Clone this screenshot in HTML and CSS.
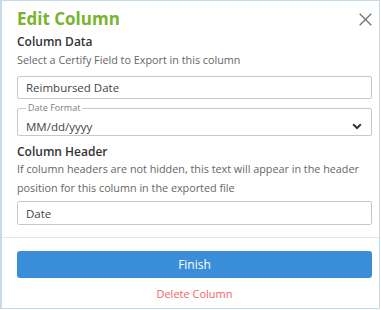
FILE: index.html
```html
<!DOCTYPE html>
<html lang="en">
<head>
    <meta charset="UTF-8">
    <title>Edit Column</title>
    <link rel="stylesheet" href="styles.css">
</head>
<body>
    <div class="dialog">
        <div class="dialog-body">
            <div class="dialog-head">
                <h1>Edit Column</h1>
                <button class="close" aria-label="Close">
                    <svg width="13" height="13" viewBox="0 0 13 13"><path d="M0.7 0.7L12.3 12.3M12.3 0.7L0.7 12.3" stroke="#707070" stroke-width="1.3" fill="none"/></svg>
                </button>
            </div>
            <div class="field-label">Column Data</div>
            <p class="help">Select a Certify Field to Export in this column</p>
            <input class="text-input first" type="text" value="Reimbursed Date">
            <fieldset class="select-box">
                <legend>Date Format</legend>
                <div class="select-row">
                    <span>MM/dd/yyyy</span>
                    <svg width="10" height="7" viewBox="0 0 10 7"><path d="M1.2 1.3L5 5L8.8 1.3" stroke="#333" stroke-width="2" fill="none"/></svg>
                </div>
            </fieldset>
            <div class="field-label second">Column Header</div>
            <p class="help two-line">If column headers are not hidden, this text will appear in the header position for this column in the exported file</p>
            <input class="text-input last" type="text" value="Date">
        </div>
        <div class="dialog-foot">
            <button class="finish">Finish</button>
            <a class="delete" href="#">Delete Column</a>
        </div>
    </div>
</body>
</html>
```

FILE: styles.css
```css
body {
    margin: 0;
    font-family: "Open Sans", Arial, sans-serif;
    background: #ffffff;
}
.dialog {
    width: 380px;
    height: 309px;
    box-sizing: border-box;
    border: 1px solid #c3dbeb;
    border-left-width: 2px;
    background: #ffffff;
    display: flex;
    flex-direction: column;
}
.dialog-body {
    padding: 6px 7px 0 15px;
}
.dialog-head {
    display: flex;
    justify-content: space-between;
    align-items: center;
    height: 24px;
}
h1 {
    margin: 0;
    font-size: 17px;
    font-weight: 700;
    color: #7ab32e;
    line-height: 24px;
}
.close {
    border: none;
    background: none;
    padding: 0;
    margin-right: 0;
    display: flex;
    cursor: pointer;
}
.field-label {
    margin-top: 2px;
    font-size: 12px;
    font-weight: 600;
    color: #333333;
    line-height: 18px;
}
.field-label.second {
    margin-top: 8px;
    line-height: 15px;
}
.help {
    margin: 0;
    font-size: 10.8px;
    color: #666666;
    line-height: 18px;
}
.help.two-line {
    line-height: 19px;
}
.text-input {
    display: block;
    width: 100%;
    height: 23px;
    box-sizing: border-box;
    border: 1px solid #c8c8c8;
    border-radius: 2px;
    padding: 0 8px;
    font-family: "Open Sans", Arial, sans-serif;
    font-size: 11.5px;
    color: #444444;
    outline: none;
}
.text-input.first {
    margin-top: 7px;
}
.text-input.last {
    margin-top: 4px;
    height: 24px;
}
.select-box {
    margin: 4px 0 0;
    padding: 4px 9px 0 8px;
    border: 1px solid #c8c8c8;
    border-radius: 2px;
}
.select-box legend {
    font-size: 9px;
    line-height: 10px;
    color: #808080;
    padding: 0 2px;
}
.select-row {
    display: flex;
    justify-content: space-between;
    align-items: center;
    height: 18px;
    font-size: 11.5px;
    color: #444444;
}
.dialog-foot {
    margin-top: auto;
    border-top: 1px solid #e6e6e6;
    padding: 13px 7px 6px 15px;
    display: flex;
    flex-direction: column;
    align-items: center;
    height: 71px;
    box-sizing: border-box;
}
.finish {
    width: 100%;
    height: 30px;
    border: none;
    border-radius: 3px;
    background: #3a8ed9;
    color: #ffffff;
    font-family: "Open Sans", Arial, sans-serif;
    font-size: 12px;
    cursor: pointer;
}
.delete {
    margin-top: 8px;
    font-size: 11px;
    line-height: 16px;
    color: #f26464;
    text-decoration: none;
}
```
